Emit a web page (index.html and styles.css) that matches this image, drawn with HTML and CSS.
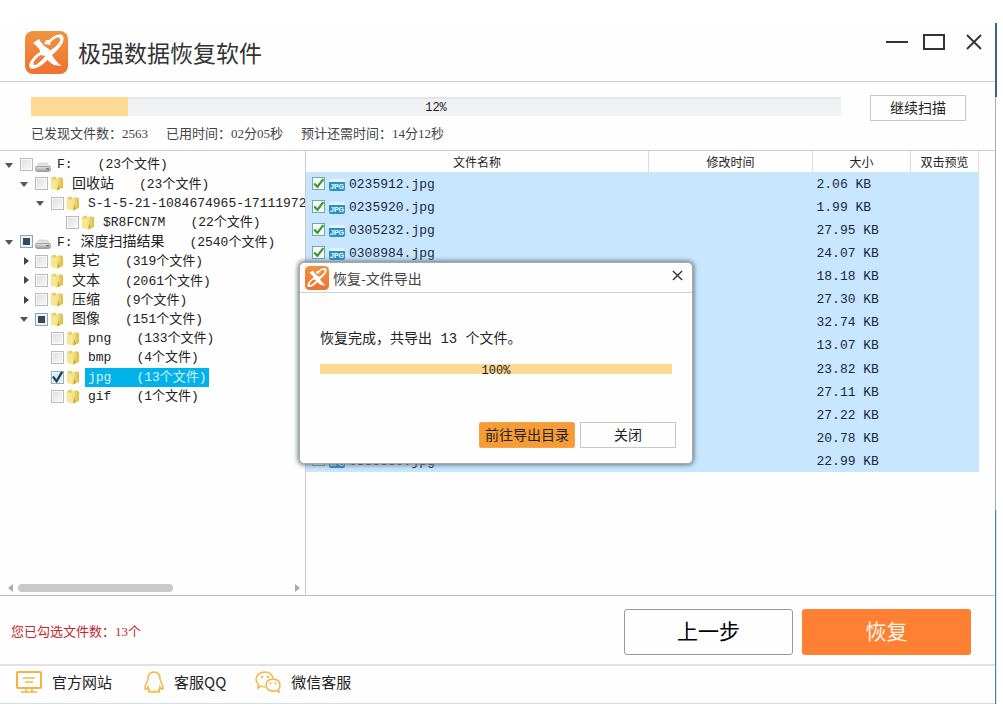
FILE: index.html
```html
<!DOCTYPE html>
<html lang="zh-CN">
<head>
<meta charset="utf-8">
<title>极强数据恢复软件</title>
<link rel="stylesheet" href="styles.css">
</head>
<body>
<svg class="defs" aria-hidden="true">
  <defs>
    <linearGradient id="orange" x1="0" y1="0" x2="0" y2="1"><stop offset="0" stop-color="#f0933f"/><stop offset="1" stop-color="#ee7230"/></linearGradient>
    <linearGradient id="gold" x1="0" y1="0" x2="1" y2="0"><stop offset="0" stop-color="#f7eb9c"/><stop offset="1" stop-color="#dcba3e"/></linearGradient>
    <linearGradient id="steel" x1="0" y1="0" x2="0" y2="1"><stop offset="0" stop-color="#e6e6e6"/><stop offset="1" stop-color="#9a9a9a"/></linearGradient>
  </defs>
  <symbol id="logo" viewBox="0 0 43 43">
    <rect width="43" height="43" rx="8" fill="url(#orange)"/>
    <path d="M8 12 L14 8 C17 13 20 16 24 18 C27 25 31 31 37 35 L29 34 C25 32 22 29 20 25 L15 24 C17 20 13 16 8 12Z" fill="#fff"/>
    <path d="M17 20 C8 24 2 34 5 37 C9 40 19 34 26 25 C33 19 41 11 38 5 C36 2 29 4 24 9 L21 9 L19 13 L26 14 L25 12 C29 7 34 5 35 8 C36 11 30 17 24 20 C18 29 11 35 9 34 C7 32 11 26 19 22Z" fill="#fff"/>
  </symbol>
  <symbol id="folder" viewBox="0 0 14 15">
    <path d="M1 2 L4 0.5 L6 1 L7 3 V13.5 L1 13Z" fill="#ead065"/>
    <path d="M6 3 L10 1 L13 2.5 V12 L7 14.5Z" fill="url(#gold)"/>
    <path d="M1 2.5 L6 4 L7 14.5 L1 12.5Z" fill="#f5e793"/>
    <path d="M7 14.5 L8.5 8 L10 13" fill="#cfa92f"/>
  </symbol>
  <symbol id="drive" viewBox="0 0 16 10">
    <path d="M4 1 H12 L15.500 5 H0.500Z" fill="#e3e3e3" stroke="#bbb" stroke-width=".5"/>
    <rect x=".5" y="4.500" width="15" height="5" rx="2" fill="url(#steel)" stroke="#888" stroke-width=".7"/>
    <rect x="11" y="6" width="3" height="1.500" fill="#5d8c6b"/>
  </symbol>
  <symbol id="check" viewBox="0 0 12 12"><path d="M2 6 L5 9 L10.500 2" fill="none" stroke="#329a32" stroke-width="2"/></symbol>
</svg>

<div class="screen">
<div class="window">
  <header class="titlebar">
    <svg class="logo"><use href="#logo"/></svg>
    <h1>极强数据恢复软件</h1>
    <div class="controls">
      <button aria-label="最小化"><svg viewBox="0 0 22 18"><path d="M0 9H22" stroke="#333" stroke-width="2"/></svg></button>
      <button aria-label="最大化"><svg viewBox="0 0 22 18"><rect x="1" y="2" width="20" height="14" fill="none" stroke="#333" stroke-width="2"/></svg></button>
      <button aria-label="关闭窗口"><svg class="narrow" viewBox="0 0 16 18"><path d="M1 2L15 16M15 2L1 16" stroke="#333" stroke-width="1.800"/></svg></button>
    </div>
  </header>

  <section class="scan">
    <div class="progress" role="progressbar" aria-valuenow="12"><div class="fill" style="width:12%"></div><span>12%</span></div>
    <button class="plain-button">继续扫描</button>
    <p class="stats"><span>已发现文件数：2563</span><span>已用时间：02分05秒</span><span>预计还需时间：14分12秒</span></p>
  </section>

  <main class="browser">
    <aside class="sidebar">
      <ul class="tree">
        <li class="level-0"><i class="arrow open"></i><input type="checkbox" id="t1"><svg class="tree-icon drive"><use href="#drive"/></svg><label for="t1"><span>F:</span><span>(23个文件)</span></label></li>
        <li class="level-1"><i class="arrow open"></i><input type="checkbox" id="t2"><svg class="tree-icon"><use href="#folder"/></svg><label for="t2"><span class="han">回收站</span><span>(23个文件)</span></label></li>
        <li class="level-2"><i class="arrow open"></i><input type="checkbox" id="t3"><svg class="tree-icon"><use href="#folder"/></svg><label for="t3"><span>S-1-5-21-1084674965-17111972</span></label></li>
        <li class="level-3"><i class="arrow"></i><input type="checkbox" id="t4"><svg class="tree-icon"><use href="#folder"/></svg><label for="t4"><span>$R8FCN7M</span><span>(22个文件)</span></label></li>
        <li class="level-0"><i class="arrow open"></i><input type="checkbox" id="t5" class="partial"><svg class="tree-icon drive"><use href="#drive"/></svg><label for="t5"><span>F: <span class="han">深度扫描结果</span></span><span>(2540个文件)</span></label></li>
        <li class="level-1"><i class="arrow shut"></i><input type="checkbox" id="t6"><svg class="tree-icon"><use href="#folder"/></svg><label for="t6"><span class="han">其它</span><span>(319个文件)</span></label></li>
        <li class="level-1"><i class="arrow shut"></i><input type="checkbox" id="t7"><svg class="tree-icon"><use href="#folder"/></svg><label for="t7"><span class="han">文本</span><span>(2061个文件)</span></label></li>
        <li class="level-1"><i class="arrow shut"></i><input type="checkbox" id="t8"><svg class="tree-icon"><use href="#folder"/></svg><label for="t8"><span class="han">压缩</span><span>(9个文件)</span></label></li>
        <li class="level-1"><i class="arrow open"></i><input type="checkbox" id="t9" class="partial"><svg class="tree-icon"><use href="#folder"/></svg><label for="t9"><span class="han">图像</span><span>(151个文件)</span></label></li>
        <li class="level-2"><i class="arrow"></i><input type="checkbox" id="t10"><svg class="tree-icon"><use href="#folder"/></svg><label for="t10"><span>png</span><span>(133个文件)</span></label></li>
        <li class="level-2"><i class="arrow"></i><input type="checkbox" id="t11"><svg class="tree-icon"><use href="#folder"/></svg><label for="t11"><span>bmp</span><span>(4个文件)</span></label></li>
        <li class="level-2"><i class="arrow"></i><span class="ticked"><input type="checkbox" id="t12" checked><svg viewBox="0 0 14 14"><path d="M2 6L6 11L12 1" fill="none" stroke="#274257" stroke-width="2.500"/></svg></span><svg class="tree-icon"><use href="#folder"/></svg><label for="t12" class="selected"><span>jpg</span><span>(13个文件)</span></label></li>
        <li class="level-2"><i class="arrow"></i><input type="checkbox" id="t13"><svg class="tree-icon"><use href="#folder"/></svg><label for="t13"><span>gif</span><span>(1个文件)</span></label></li>
      </ul>
      <div class="scrollbar"><i class="tip left"></i><div class="track"><div class="thumb"></div></div><i class="tip right"></i></div>
    </aside>

    <div class="files">
      <table>
        <colgroup><col><col class="col-time"><col class="col-size"><col class="col-preview"></colgroup>
        <thead><tr><th>文件名称</th><th>修改时间</th><th>大小</th><th>双击预览</th></tr></thead>
        <tbody>
          <tr><td><label class="file"><span class="tick"><input type="checkbox" checked><svg><use href="#check"/></svg></span><span class="type">JPG</span>0235912.jpg</label></td><td></td><td>2.06 KB</td><td></td></tr>
          <tr><td><label class="file"><span class="tick"><input type="checkbox" checked><svg><use href="#check"/></svg></span><span class="type">JPG</span>0235920.jpg</label></td><td></td><td>1.99 KB</td><td></td></tr>
          <tr><td><label class="file"><span class="tick"><input type="checkbox" checked><svg><use href="#check"/></svg></span><span class="type">JPG</span>0305232.jpg</label></td><td></td><td>27.95 KB</td><td></td></tr>
          <tr><td><label class="file"><span class="tick"><input type="checkbox" checked><svg><use href="#check"/></svg></span><span class="type">JPG</span>0308984.jpg</label></td><td></td><td>24.07 KB</td><td></td></tr>
          <tr><td></td><td></td><td>18.18 KB</td><td></td></tr>
          <tr><td></td><td></td><td>27.30 KB</td><td></td></tr>
          <tr><td></td><td></td><td>32.74 KB</td><td></td></tr>
          <tr><td></td><td></td><td>13.07 KB</td><td></td></tr>
          <tr><td></td><td></td><td>23.82 KB</td><td></td></tr>
          <tr><td></td><td></td><td>27.11 KB</td><td></td></tr>
          <tr><td></td><td></td><td>27.22 KB</td><td></td></tr>
          <tr><td></td><td></td><td>20.78 KB</td><td></td></tr>
          <tr><td><label class="file"><span class="tick"><input type="checkbox" checked><svg><use href="#check"/></svg></span><span class="type">JPG</span>0389880.jpg</label></td><td></td><td>22.99 KB</td><td></td></tr>
        </tbody>
      </table>
    </div>
  </main>

  <section class="actions">
    <p>您已勾选文件数：13个</p>
    <button class="back">上一步</button>
    <button class="recover">恢复</button>
  </section>

  <footer class="links">
    <a href="#site"><svg viewBox="0 0 26 22"><g fill="none" stroke="#f2b544" stroke-width="2"><rect x="1" y="1" width="24" height="16" rx="1"/><path d="M10 17V21M16 17V21M5 21H21" stroke-width="1.500"/><path d="M7 7H19M9 11H17" stroke-width="1.300"/></g></svg>官方网站</a>
    <a href="#qq"><svg class="qq" viewBox="0 0 20 22"><path d="M10 1C6 1 4 4 4 8C4 10 1 13 1 17C1 19 2 19 4 16C4 18 5 19 6 19C4 20 4 21 6 21H9L10 20L11 21H14C16 21 16 20 14 19C15 19 16 18 16 16C18 19 19 19 19 17C19 13 16 10 16 8C16 4 14 1 10 1Z" fill="none" stroke="#f2b544" stroke-width="1.500"/></svg>客服QQ</a>
    <a href="#wechat"><svg viewBox="0 0 26 22"><g fill="none" stroke="#f2b544" stroke-width="1.500"><path d="M10 16C8.500 16 7 15.700 6 15L3 17L3.500 13.500C2 12 1 10.500 1 8.500C1 4 5 1 10 1C14 1 17 3.500 18 7"/><path d="M18 8C14 8 11 10.500 11 14C11 17.500 14 20 18 20C19 20 20 20 21 19.500L24 21L23.500 18.500C24.500 17.500 25 16 25 14C25 10.500 22 8 18 8Z"/></g><g fill="#f2b544"><circle cx="7" cy="6" r="1.200"/><circle cx="13" cy="6" r="1.200"/><circle cx="15.500" cy="12.500" r="1"/><circle cx="20.500" cy="12.500" r="1"/></g></svg>微信客服</a>
  </footer>

  <div class="dialog" role="dialog" aria-labelledby="dialog-title">
    <div class="dialog-head">
      <svg class="small-logo"><use href="#logo"/></svg>
      <h2 id="dialog-title">恢复-文件导出</h2>
      <button aria-label="关闭对话框"><svg viewBox="0 0 12 12"><path d="M1 1L11 11M11 1L1 11" stroke="#333" stroke-width="1.500"/></svg></button>
    </div>
    <div class="dialog-body">
      <p>恢复完成，共导出 13 个文件。</p>
      <div class="done" role="progressbar" aria-valuenow="100">100%</div>
      <div class="dialog-buttons"><button class="plain-button primary">前往导出目录</button><button class="plain-button">关闭</button></div>
    </div>
  </div>
</div>
<div class="edge"><i class="edge-top"></i><i class="edge-middle"></i><i class="edge-bottom"></i></div>
</div>
</body>
</html>
```
FILE: styles.css
```css
* { box-sizing: border-box; }
body {
  margin: 0;
  background: #fff;
  color: #222;
  font: 14px "Noto Sans CJK SC", sans-serif;
}
h1, h2, p, ul { margin: 0; padding: 0; font-weight: 400; }
button { font: inherit; color: inherit; padding: 0; border: 0; background: none; }
svg { display: block; flex: none; }
.defs { position: absolute; width: 0; height: 0; }

.screen { display: flex; min-height: 100vh; padding: 23px 6px 3px 0; }
.window {
  position: relative;
  flex: 1;
  display: flex;
  flex-direction: column;
  background: #fefefe;
  border-bottom: 1px solid #c9e3ee;
}
.edge { width: 2px; display: flex; flex-direction: column; }
.edge-top { height: 74px; background: #3d5f92; }
.edge-middle { flex: 1; border-left: 1px solid #a9acb2; }
.edge-bottom { height: 194px; background: #4a86a3; border-right: 1px solid #d6e6ee; }

.titlebar {
  display: flex;
  align-items: center;
  gap: 10px;
  height: 59px;
  padding: 0 13px 0 25px;
  border-bottom: 1px solid #d0d0d0;
}
.logo { width: 43px; height: 43px; }
.titlebar h1 { flex: 1; font-size: 23px; line-height: 58px; color: #333; }
.controls { display: flex; gap: 15px; align-self: flex-start; padding-top: 10px; }
.controls svg { width: 22px; height: 18px; }
.controls .narrow { width: 16px; margin-left: 6px; }

.scan {
  display: grid;
  grid-template-columns: 1fr 96px;
  column-gap: 29px;
  align-items: center;
  height: 69px;
  padding: 12px 29px 5px 31px;
  border-bottom: 1px solid #ccc;
}
.progress {
  position: relative;
  height: 19px;
  margin-bottom: 4px;
  background: #f0f1f3;
  border-top: 2px solid #e4e6e8;
  text-align: center;
  font: 12px/18px "Liberation Mono", monospace;
}
.fill { position: absolute; left: 0; top: -2px; bottom: 0; background: #fdd993; }
.progress span { position: relative; }
.plain-button {
  height: 26px;
  border: 1px solid #c8c8c8;
  background: #fefefe;
  font-size: 14px;
  line-height: 20px;
  padding-bottom: 2px;
}
.stats {
  display: flex;
  gap: 18px;
  font: 13px/20px "Liberation Serif", "Noto Sans CJK SC", serif;
  color: #444;
}

.browser { flex: 1; display: flex; min-height: 0; }
.sidebar {
  flex: none;
  width: 306px;
  display: flex;
  flex-direction: column;
  justify-content: space-between;
  overflow: hidden;
  border-right: 1px solid #ccc;
  padding: 4px 0 3px;
}
.tree {
  display: grid;
  grid-template-rows: repeat(13, minmax(0, 1fr));
  height: 251px;
  list-style: none;
  font: 13px/18px "Liberation Mono", "Noto Sans CJK SC", monospace;
}
.tree li { display: flex; align-items: center; white-space: nowrap; }
.level-0 { padding-left: 4px; }
.level-1 { padding-left: 19px; }
.level-2 { padding-left: 35px; }
.level-3 { padding-left: 50px; }
.arrow { flex: none; width: 16px; height: 10px; }
.arrow.open::before {
  content: "";
  display: block;
  width: 0;
  margin: 3px 0 0 1px;
  border: 4px solid transparent;
  border-top: 5px solid #555;
  border-bottom: 0;
}
.arrow.shut::before {
  content: "";
  display: block;
  width: 0;
  margin: 1px 0 0 5px;
  border: 4px solid transparent;
  border-left: 5px solid #444;
  border-right: 0;
}
input { appearance: none; margin: 0; flex: none; }
.tree input {
  width: 13px;
  height: 13px;
  border: 1px solid #bbb;
  background: linear-gradient(135deg, #dedede, #fafafa);
  box-shadow: inset 0 0 0 1px #f8f8f8;
}
.tree .partial { background: #34495b; border-color: #8ea7b8; box-shadow: inset 0 0 0 2px #edf4f8; }
.ticked, .tick { position: relative; flex: none; display: block; }
.ticked svg, .tick svg { position: absolute; inset: 0; width: 100%; height: 100%; pointer-events: none; }
.ticked input { display: block; border-color: #83b4d2; background: #dcedf7; }
.tree-icon { width: 14px; height: 15px; margin: 0 5px 0 2px; }
.tree-icon.drive { width: 16px; height: 10px; margin-top: 5px; margin-right: 3px; }
.tree label { display: flex; align-items: baseline; gap: 25px; padding: 1px 2px 0 3px; color: #222; }
.tree .han { font-size: 14px; }
.tree .selected { background: #00b1ea; color: #d9f3fc; }

.scrollbar { display: flex; align-items: center; gap: 5px; padding: 0 5px 0 8px; }
.track { flex: 1; }
.thumb { width: 57%; height: 8px; border-radius: 4px; background: #c9c9c9; }
.tip { border: 4px solid transparent; }
.tip.left { border-left: 0; border-right: 5px solid #aaa; }
.tip.right { border-right: 0; border-left: 5px solid #aaa; }

.files { flex: 1; padding-right: 16px; }
table { width: 100%; height: 321px; table-layout: fixed; border-collapse: collapse; }
.col-time { width: 164px; }
.col-size { width: 98px; }
.col-preview { width: 68px; }
th {
  height: 21px;
  padding: 0;
  border-right: 1px solid #ddd;
  font-weight: 400;
  font-size: 12px;
  line-height: 20px;
}
td {
  height: 23px;
  padding: 3px 4px 0;
  background: #c8e7ff;
  color: #17283e;
  font: 13px/20px "Liberation Mono", monospace;
  white-space: nowrap;
}
.file { display: flex; align-items: center; gap: 4px; padding-left: 2px; }
.tick { margin-bottom: 4px; }
.tick input { display: block; width: 13px; height: 13px; border: 1px solid #7f9fab; background: #f7fcf7; }
.type {
  width: 16px;
  height: 12px;
  border-top: 3px solid #e4f3fb;
  border-radius: 2px;
  background: #2591c7;
  color: #fff;
  font: bold 7px/9px "Liberation Sans", sans-serif;
  text-align: center;
}

.actions {
  display: flex;
  align-items: center;
  gap: 9px;
  height: 69px;
  padding: 3px 24px 0 11px;
  border-top: 1px solid #bbb;
}
.actions p { flex: 1; color: #c0282d; font: 13px/20px "Liberation Serif", "Noto Sans CJK SC", serif; }
.actions button { width: 169px; height: 46px; border-radius: 3px; font-size: 21px; line-height: 40px; padding-bottom: 4px; }
.back { border: 1px solid #999; color: #000; }
.actions .recover { background: #ff8033; color: #fff5e8; }

.links {
  display: flex;
  align-items: center;
  gap: 29px;
  height: 39px;
  padding: 0 16px 5px;
  border-top: 2px solid #e2e2e2;
  font-size: 15px;
}
.links a { display: flex; align-items: center; gap: 10px; color: #222; text-decoration: none; line-height: 22px; }
.links svg { width: 26px; height: 22px; }
.links .qq { width: 20px; margin-left: 3px; }

.dialog {
  position: absolute;
  inset: 0 3px 0 0;
  margin: auto;
  width: 394px;
  height: fit-content;
  background: #fefefe;
  border: 1px solid #aaa;
  border-radius: 5px;
  box-shadow: 0 0 5px 1px #66727a;
}
.dialog-head {
  display: flex;
  align-items: center;
  gap: 4px;
  height: 30px;
  padding: 0 9px 0 5px;
  border-bottom: 1px solid #cdd5d8;
}
.small-logo { width: 24px; height: 24px; }
.dialog h2 { flex: 1; font-size: 14px; line-height: 24px; color: #444; }
.dialog-head button svg { width: 11px; height: 11px; margin-bottom: 4px; }
.dialog-body { padding: 36px 16px 15px 20px; }
.dialog-body p { font: 14px/20px "Liberation Mono", "Noto Sans CJK SC", monospace; white-space: nowrap; }
.done {
  height: 10px;
  margin: 15px 4px 0 0;
  background: #fdd993;
  text-align: center;
  font: 12px/14px "Liberation Mono", monospace;
}
.dialog-buttons { display: flex; justify-content: flex-end; gap: 5px; margin-top: 48px; }
.dialog-buttons button { width: 96px; }
.dialog-buttons .primary { background: #f79b34; border-color: #f3a64e; border-radius: 2px; }
```
